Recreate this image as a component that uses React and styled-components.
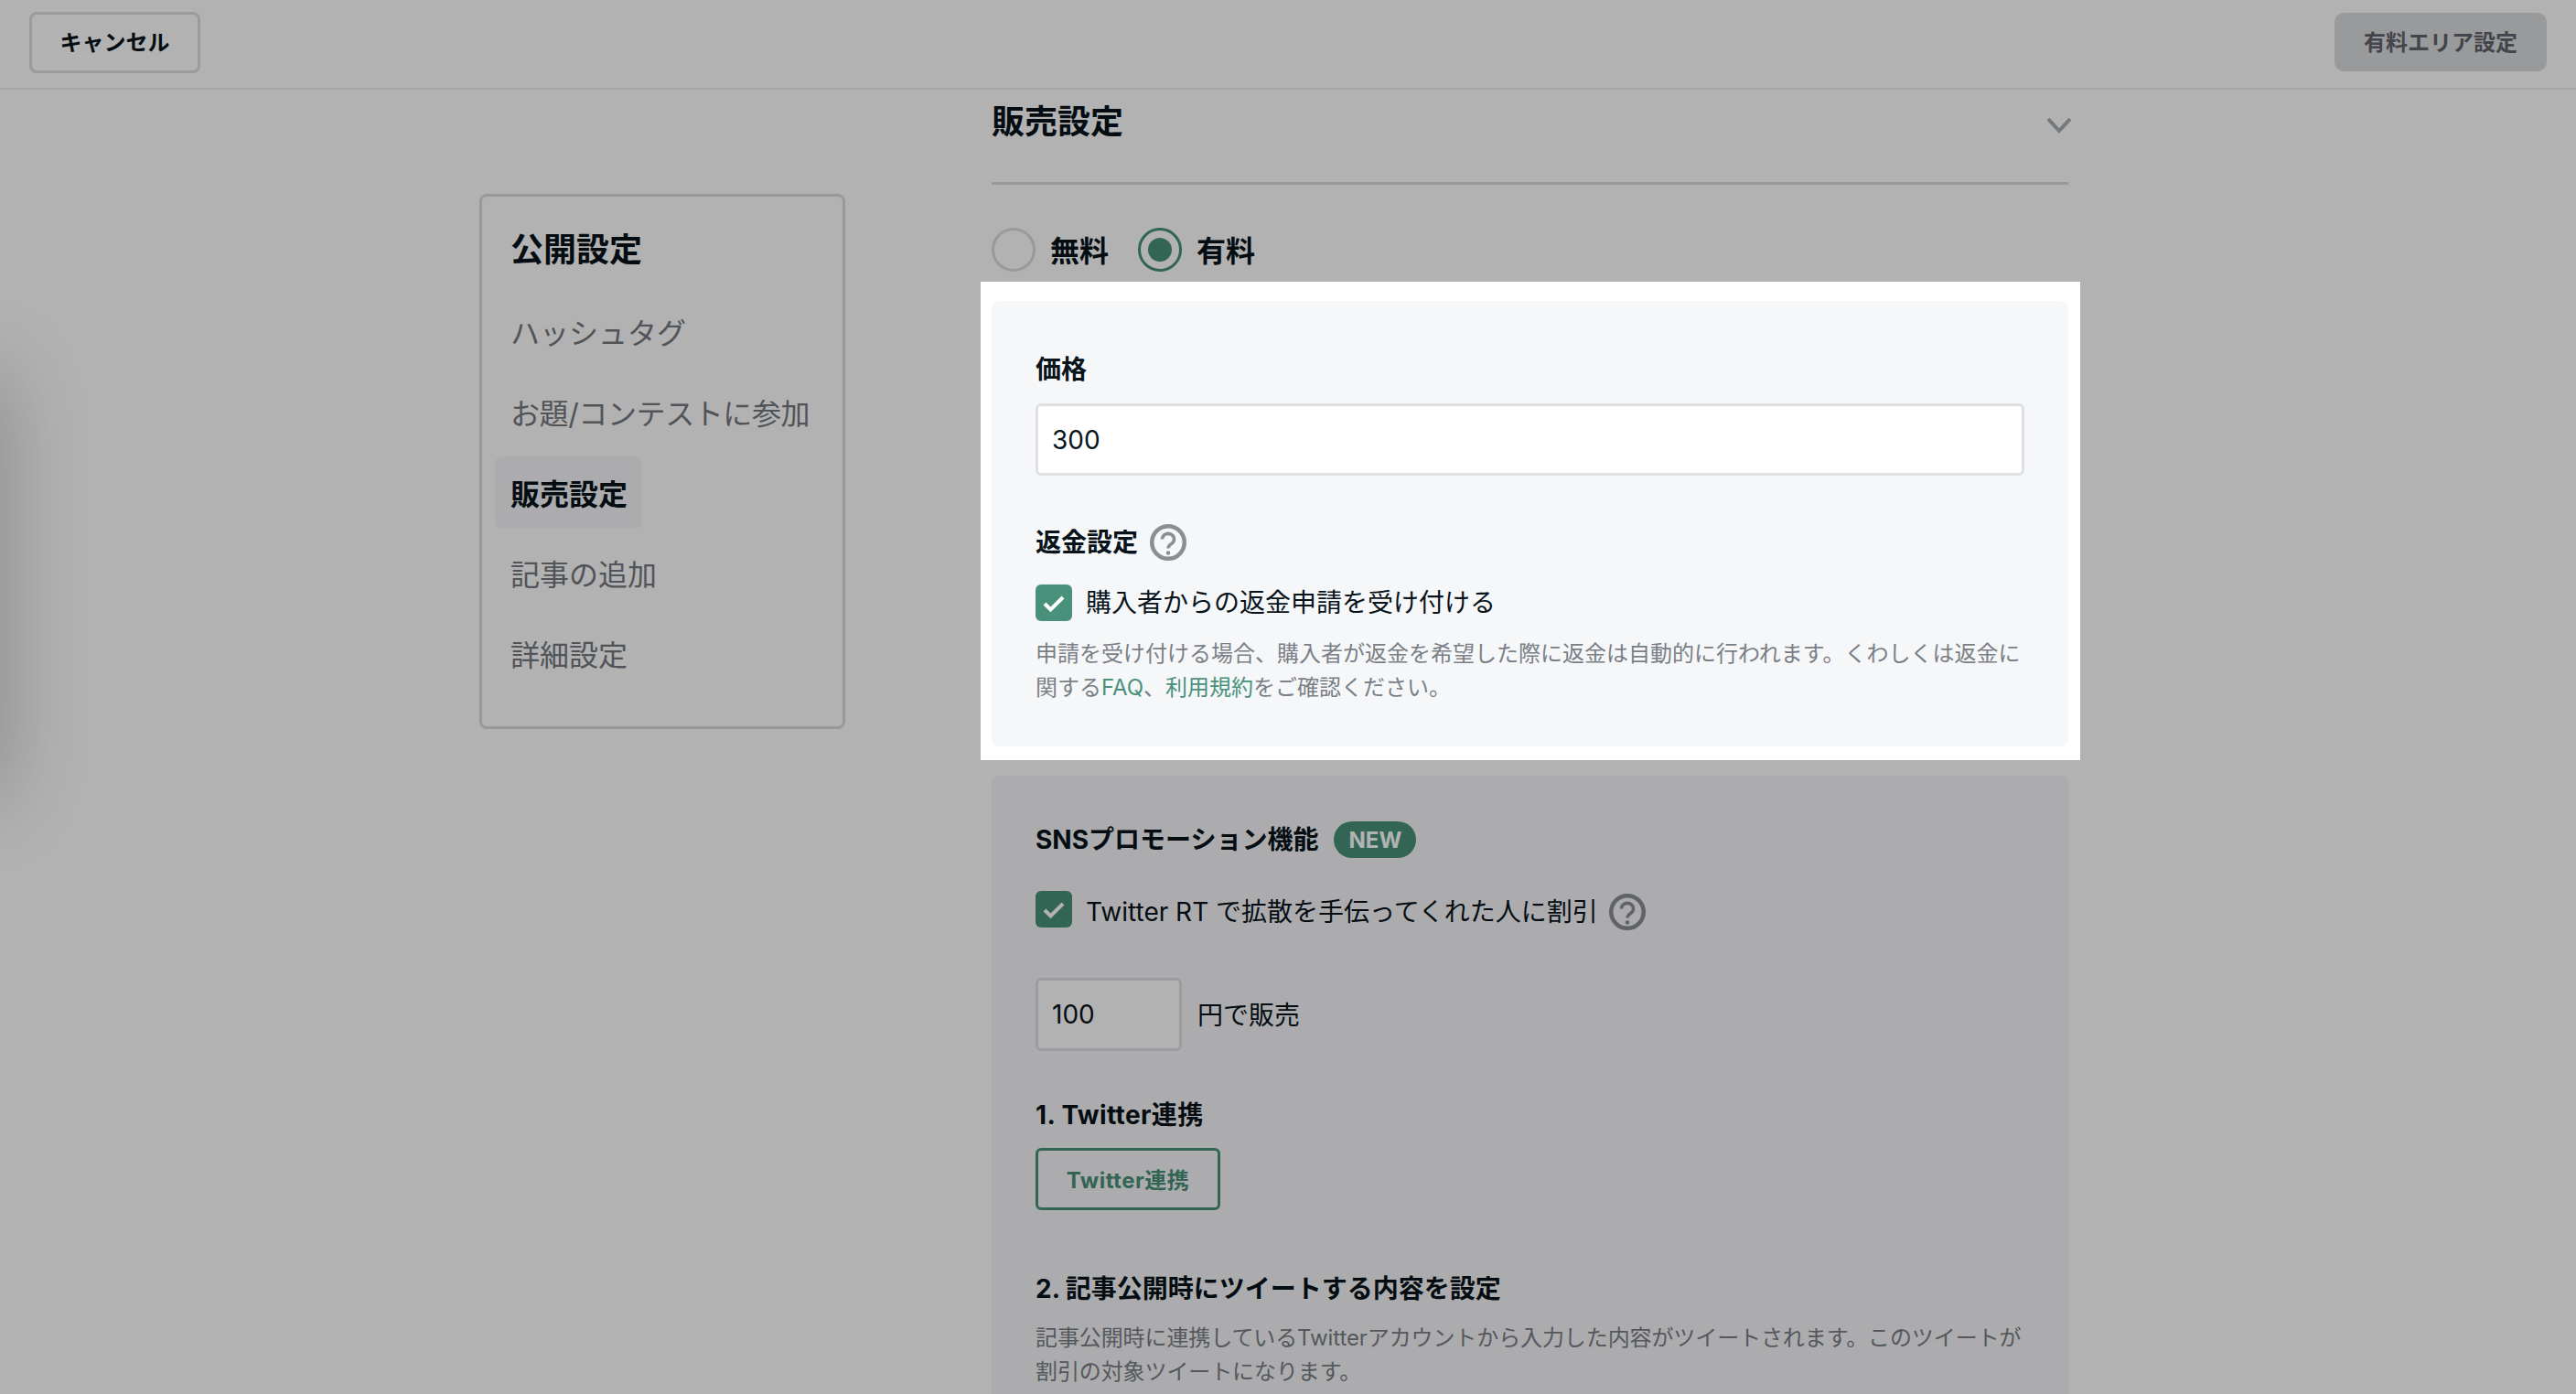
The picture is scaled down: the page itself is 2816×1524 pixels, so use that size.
import styled, { createGlobalStyle } from "styled-components";

const GlobalStyle = createGlobalStyle`
  html, body {
    margin: 0;
    height: 100%;
    overflow: hidden;
    background: #fff;
  }
  body {
    font-family: Inter, "Noto Sans CJK JP", sans-serif;
    color: #08131a;
  }
  * {
    box-sizing: border-box;
  }
`;

const Page = styled.div`
  position: relative;
  height: 100vh;
  overflow: hidden;
`;

const EdgeShadow = styled.div`
  position: absolute;
  left: -60px;
  top: 410px;
  width: 60px;
  height: 460px;
  box-shadow: 0 0 90px rgba(0, 0, 0, 0.28);
`;

const Header = styled.header`
  display: flex;
  align-items: center;
  justify-content: space-between;
  height: 98px;
  padding: 0 32px 4px;
  border-bottom: 2px solid #ebebeb;
`;

const CancelButton = styled.button`
  width: 187px;
  height: 67px;
  padding: 0 0 3px;
  background: #fff;
  border: 3px solid #dcdee1;
  border-radius: 8px;
  font: 700 24px Inter, "Noto Sans CJK JP", sans-serif;
  color: #08131a;
`;

const AreaButton = styled.button`
  width: 232px;
  height: 64px;
  padding: 0 0 3px;
  background: #dcdde0;
  border: 0;
  border-radius: 10px;
  font: 600 24px Inter, "Noto Sans CJK JP", sans-serif;
  color: #60646b;
`;

const Body = styled.div`
  display: flex;
  align-items: flex-start;
  gap: 160px;
  padding-left: 524px;
`;

const Sidebar = styled.nav`
  display: flex;
  flex-direction: column;
  align-items: flex-start;
  gap: 9px;
  flex: none;
  width: 400px;
  margin-top: 114px;
  padding: 31px 14px 40px;
  border: 3px solid #dadce0;
  border-radius: 8px;
`;

const SidebarTitle = styled.div`
  margin: 0 0 14px 17px;
  font-size: 36px;
  line-height: 54px;
  font-weight: 700;
`;

const SidebarItem = styled.a`
  display: flex;
  align-items: center;
  height: 79px;
  padding: 0 16px 2px 17px;
  border-radius: 8px;
  font-size: 32px;
  white-space: nowrap;
  letter-spacing: ${(p) => (p.$tight ? "-0.4px" : "0")};
  font-weight: ${(p) => (p.$active ? 700 : 400)};
  color: ${(p) => (p.$active ? "#08131a" : "#747980")};
  background: ${(p) => (p.$active ? "#f6f7f9" : "transparent")};
`;

const Main = styled.main`
  flex: none;
  width: 1177px;
`;

const SectionHead = styled.div`
  display: flex;
  align-items: center;
  justify-content: space-between;
  height: 104px;
  padding: 8px 0 40px;
  border-bottom: 3px solid #dadce0;
`;

const SectionTitle = styled.h2`
  margin: 0;
  font-size: 36px;
  line-height: 54px;
  font-weight: 700;
`;

const Chevron = styled.svg`
  width: 28px;
  height: 18px;
  margin: 8px -4px 0 0;
`;

const RadioRow = styled.div`
  display: flex;
  align-items: center;
  margin-top: 47px;
`;

const Radio = styled.span`
  display: flex;
  align-items: center;
  justify-content: center;
  width: 48px;
  height: 48px;
  border-radius: 50%;
  border: 3px solid ${(p) => (p.$on ? "#49917a" : "#dadce0")};
  background: #fff;
  &::after {
    content: "";
    display: ${(p) => (p.$on ? "block" : "none")};
    width: 26px;
    height: 26px;
    border-radius: 50%;
    background: #49917a;
  }
`;

const RadioLabel = styled.span`
  width: 112px;
  padding-left: 16px;
  padding-bottom: 2px;
  font-size: 32px;
  font-weight: 700;
  white-space: nowrap;
`;

const Spotlight = styled.div`
  position: relative;
  z-index: 1;
  margin: 11px -13px 0 -12px;
  padding: 21px 13px 15px 12px;
  background: #fff;
  box-shadow: 0 0 0 4000px rgba(0, 0, 0, 0.3);
`;

const Card = styled.section`
  padding: ${(p) => p.$top}px 48px 46px;
  margin-top: ${(p) => p.$gap || 0}px;
  background: #f6f7f9;
  border-radius: 8px;
`;

const Label = styled.div`
  margin-top: ${(p) => p.$gap || 0}px;
  font-size: 28px;
  line-height: 42px;
  font-weight: 700;
  letter-spacing: ${(p) => (p.$wide ? "0.4px" : "0")};
`;

const LabelRow = styled.div`
  display: flex;
  align-items: center;
  gap: ${(p) => p.$space}px;
  margin-top: ${(p) => p.$gap || 0}px;
`;

const PriceInput = styled.input`
  display: block;
  width: ${(p) => p.$width || "100%"};
  height: ${(p) => p.$height}px;
  margin-top: ${(p) => p.$gap || 0}px;
  padding: 0 15px;
  background: #fff;
  border: 3px solid #dee0e4;
  border-radius: 6px;
  font: 400 28px Inter, "Noto Sans CJK JP", sans-serif;
  color: #08131a;
  outline: none;
`;

const HelpSvg = styled.svg`
  flex: none;
  width: 40px;
  height: 40px;
  margin-top: ${(p) => p.$nudge || 0}px;
  margin-left: ${(p) => p.$pull || 0}px;
`;

const CheckRow = styled.div`
  display: flex;
  align-items: flex-start;
  gap: 15px;
  margin-top: ${(p) => p.$gap}px;
`;

const CheckBox = styled.span`
  flex: none;
  width: 40px;
  height: 40px;
  border-radius: 6px;
  background: #49917a;
  display: flex;
`;

const CheckText = styled.span`
  font-size: 28px;
  line-height: 40px;
  margin-top: ${(p) => p.$nudge || 0}px;
`;

const Note = styled.p`
  margin: ${(p) => p.$gap}px 0 0;
  font-size: 24px;
  line-height: 36.5px;
  letter-spacing: ${(p) => (p.$tight ? "-0.1px" : "0")};
  color: #7a7f86;
`;

const NoteLink = styled.a`
  color: #49917a;
`;

const Badge = styled.span`
  display: flex;
  align-items: center;
  justify-content: center;
  width: 90px;
  height: 40px;
  border-radius: 20px;
  background: #49917a;
  color: #fff;
  font-size: 24px;
  font-weight: 700;
`;

const AmountRow = styled.div`
  display: flex;
  align-items: center;
  gap: 17px;
  margin-top: 52px;
`;

const Plain = styled.span`
  padding-bottom: 2px;
  font-size: 28px;
`;

const OutlineButton = styled.button`
  display: block;
  width: 202px;
  height: 68px;
  margin-top: 15px;
  padding: 0 0 2px;
  background: transparent;
  border: 3px solid #49917a;
  border-radius: 6px;
  font: 700 24px Inter, "Noto Sans CJK JP", sans-serif;
  letter-spacing: 0.5px;
  color: #49917a;
`;

const HelpIcon = ({ nudge, pull }) => (
  <HelpSvg viewBox="0 0 40 40" $nudge={nudge} $pull={pull} fill="none" stroke="#8a8f94">
    <circle cx="20" cy="20" r="17.75" strokeWidth="4.5" />
    <path d="M13.5 16.5a6.5 6 0 1 1 10 5c-2.5 1.6-3.5 2.6-3.5 5" strokeWidth="3.5" />
    <circle cx="20" cy="31.5" r="2.2" fill="#8a8f94" stroke="none" />
  </HelpSvg>
);

const Check = () => (
  <CheckBox>
    <svg viewBox="0 0 40 40" width="40" height="40" fill="none">
      <path d="M10 21l6.5 6.5L30 14" stroke="#fff" strokeWidth="4" />
    </svg>
  </CheckBox>
);

const App = () => {
  return (
    <Page>
      <GlobalStyle />
      <EdgeShadow />
      <Header>
        <CancelButton>キャンセル</CancelButton>
        <AreaButton>有料エリア設定</AreaButton>
      </Header>
      <Body>
        <Sidebar>
          <SidebarTitle>公開設定</SidebarTitle>
          <SidebarItem>ハッシュタグ</SidebarItem>
          <SidebarItem $tight>お題/コンテストに参加</SidebarItem>
          <SidebarItem $active>販売設定</SidebarItem>
          <SidebarItem>記事の追加</SidebarItem>
          <SidebarItem>詳細設定</SidebarItem>
        </Sidebar>
        <Main>
          <SectionHead>
            <SectionTitle>販売設定</SectionTitle>
            <Chevron viewBox="0 0 28 18" fill="none">
              <path d="M2 2l12 13L26 2" stroke="#a8acb2" strokeWidth="4" />
            </Chevron>
          </SectionHead>
          <RadioRow>
            <Radio />
            <RadioLabel>無料</RadioLabel>
            <Radio $on />
            <RadioLabel>有料</RadioLabel>
          </RadioRow>
          <Spotlight>
            <Card $top={54}>
              <Label>価格</Label>
              <PriceInput $height={79} $gap={16} readOnly value="300" />
              <LabelRow $gap={52} $space={13}>
                <Label>返金設定</Label>
                <HelpIcon />
              </LabelRow>
              <CheckRow $gap={25}>
                <Check />
                <CheckText>購入者からの返金申請を受け付ける</CheckText>
              </CheckRow>
              <Note $gap={18}>
                申請を受け付ける場合、購入者が返金を希望した際に返金は自動的に行われます。くわしくは返金に関する
                <NoteLink>FAQ</NoteLink>、<NoteLink>利用規約</NoteLink>をご確認ください。
              </Note>
            </Card>
          </Spotlight>
          <Card $top={49} $gap={17}>
            <LabelRow $space={17}>
              <Label>SNSプロモーション機能</Label>
              <Badge>NEW</Badge>
            </LabelRow>
            <CheckRow $gap={35}>
              <Check />
              <CheckText $nudge={3}>Twitter RT で拡散を手伝ってくれた人に割引</CheckText>
              <HelpIcon nudge={3} pull={-3} />
            </CheckRow>
            <AmountRow>
              <PriceInput $width="160px" $height={80} readOnly value="100" />
              <Plain>円で販売</Plain>
            </AmountRow>
            <Label $gap={49} $wide>1. Twitter連携</Label>
            <OutlineButton>Twitter連携</OutlineButton>
            <Label $gap={65}>2. 記事公開時にツイートする内容を設定</Label>
            <Note $gap={15} $tight>
              記事公開時に連携しているTwitterアカウントから入力した内容がツイートされます。このツイートが割引の対象ツイートになります。
            </Note>
          </Card>
        </Main>
      </Body>
    </Page>
  );
};

export default App;
